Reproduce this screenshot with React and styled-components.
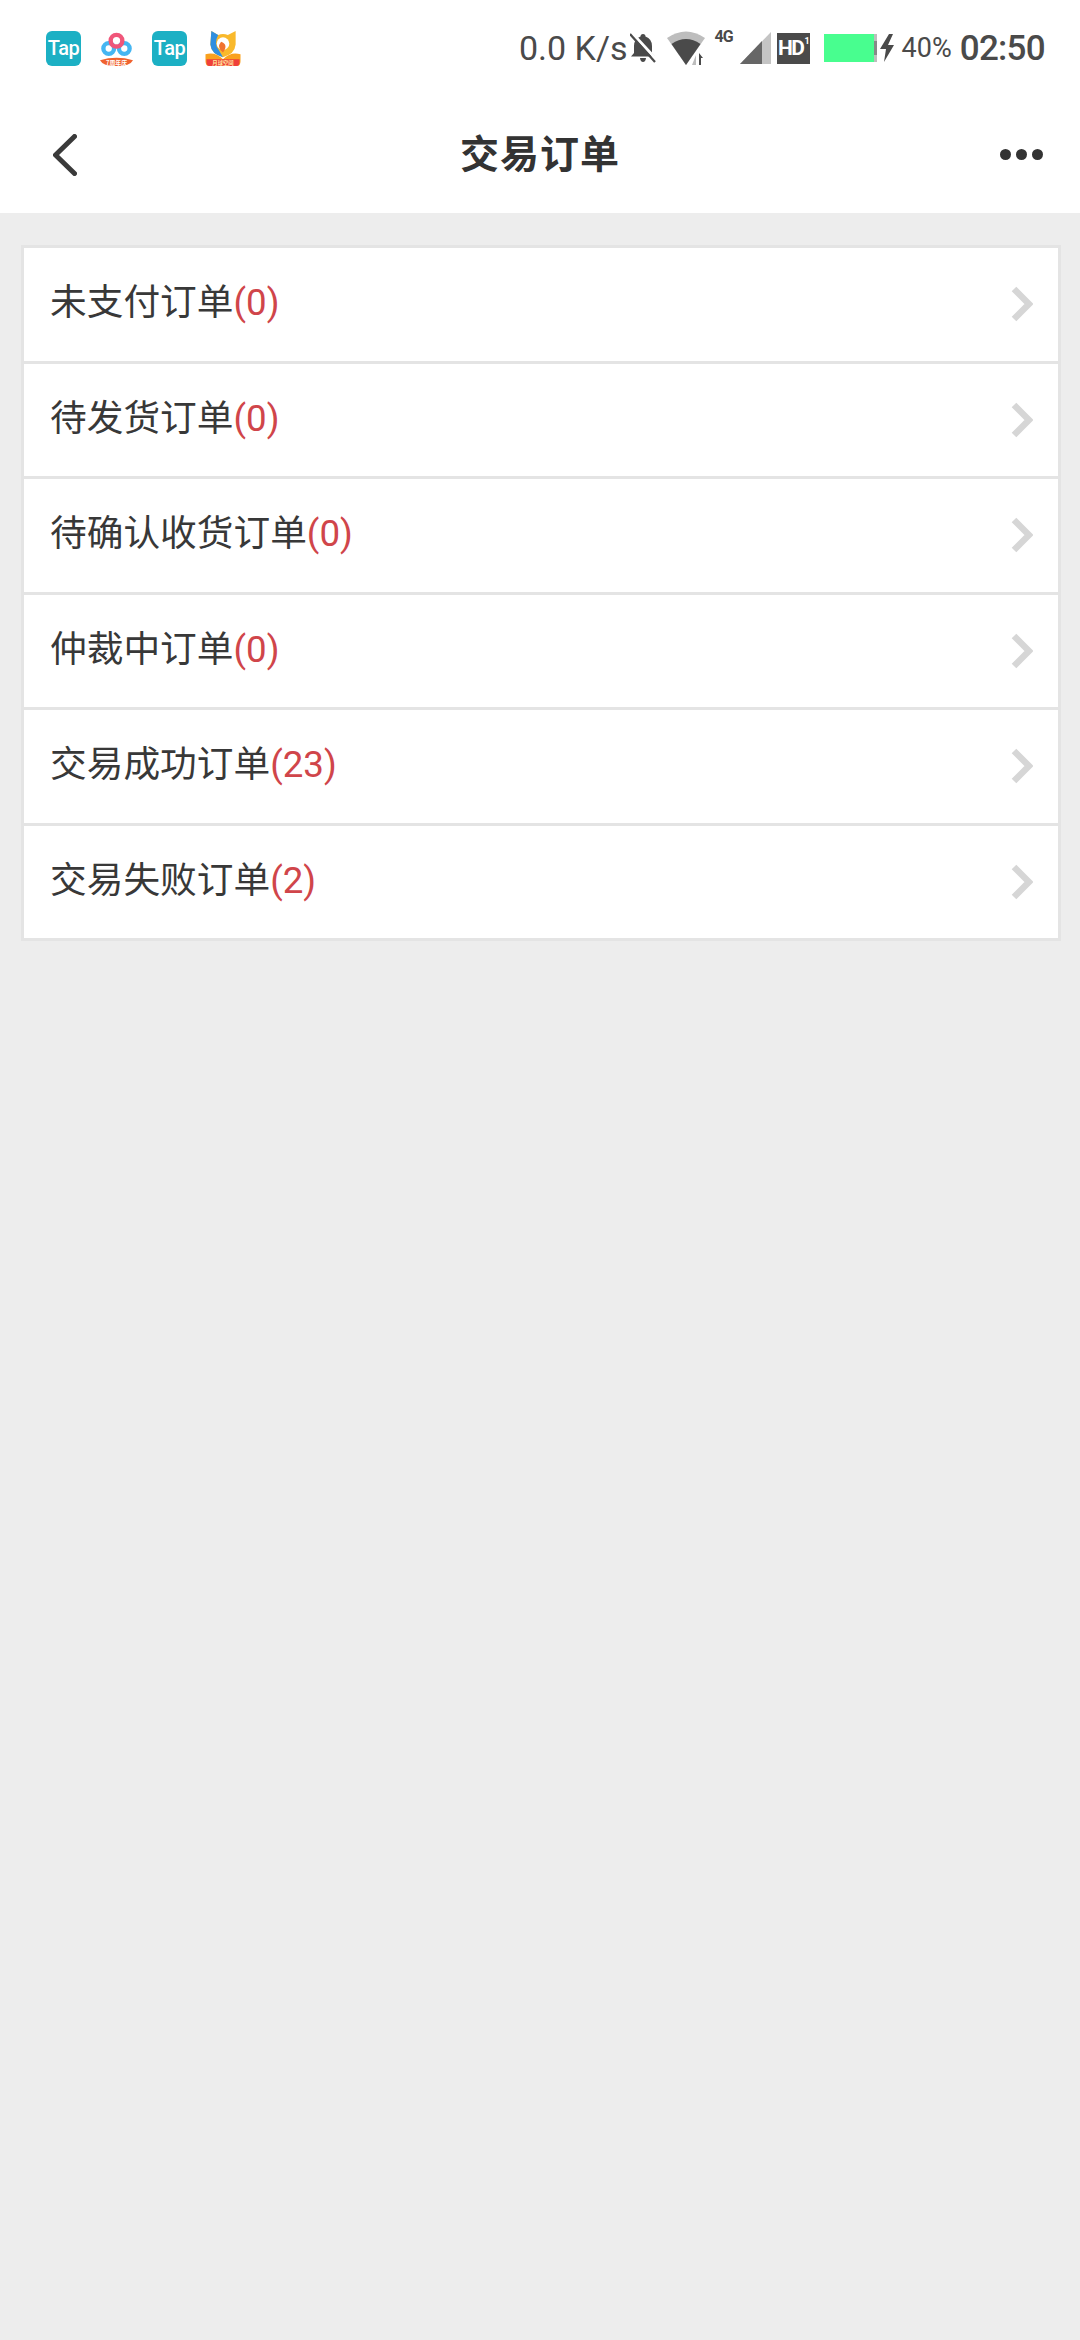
import React from "react";
import styled, { createGlobalStyle } from "styled-components";

const orders = [
  { name: "未支付订单", count: 0 },
  { name: "待发货订单", count: 0 },
  { name: "待确认收货订单", count: 0 },
  { name: "仲裁中订单", count: 0 },
  { name: "交易成功订单", count: 23 },
  { name: "交易失败订单", count: 2 },
];

const TapIcon = () => <TapBadge>Tap</TapBadge>;

const BaiduIcon = () => (
  <svg width="35" height="35" viewBox="0 0 36 36">
    <circle cx="10" cy="18" r="5.500" fill="none" stroke="#45b6f2" strokeWidth="4.500" />
    <circle cx="26" cy="18" r="5.500" fill="none" stroke="#45b6f2" strokeWidth="4.500" />
    <circle cx="18" cy="10" r="6" fill="none" stroke="#f0567a" strokeWidth="4.500" />
    <path d="M1 30 Q18 25 35 30 Q32 36 18 36 Q4 36 1 30Z" fill="#f0622f" />
    <text x="18" y="34.500" textAnchor="middle" fontSize="6" fontWeight="700" fill="#fff" fontFamily="Noto Sans CJK SC, sans-serif">7周年庆</text>
  </svg>
);

const FoxIcon = () => (
  <svg width="36" height="35" viewBox="0 0 36 36">
    <path d="M6 0 L13 4 Q18 2 23 4 L31 0 L31 14 Q30 24 18 27 Q6 24 5 14Z" fill="#f9b92c" />
    <path d="M6 0 L13 4 Q8 13 14 20 L18 27 Q6 24 5 14Z" fill="#2f8fe0" />
    <circle cx="18" cy="13" r="6.500" fill="#fff" />
    <path d="M18 22 Q11 17 16 11 Q24 14 18 22Z" fill="#f0722f" />
    <path d="M0 24 Q10 21 18 29 Q26 21 36 24 L36 31 Q36 36 32 36 L4 36 Q0 36 0 31Z" fill="#f9a11f" />
    <path d="M1 29 L35 29 L35 32 Q35 36 32 36 L4 36 Q1 36 1 32Z" fill="#ef3f3a" />
    <text x="18" y="35" textAnchor="middle" fontSize="5.500" fontWeight="700" fill="#ffe9a0" fontFamily="Noto Sans CJK SC, sans-serif">月球空间</text>
  </svg>
);

const BellOffIcon = () => (
  <svg width="26" height="30" viewBox="0 0 26 30">
    <path d="M13 1 Q15.500 1 15.500 3.500 Q22 6 22 13 L22 20 L25 23.500 L1 23.500 L4 20 L4 13 Q4 6 10.500 3.500 Q10.500 1 13 1Z" fill="#4a4a4a" />
    <path d="M10 25 L16 25 Q15.500 29 13 29 Q10.500 29 10 25Z" fill="#4a4a4a" />
    <path d="M2 0 L26 26" stroke="#fff" strokeWidth="3" />
    <path d="M0 1 L25 29" stroke="#4a4a4a" strokeWidth="2.200" />
  </svg>
);

const WifiIcon = () => (
  <svg width="40" height="36" viewBox="0 0 40 36">
    <path d="M1 8 Q20 -5 39 8 L20 35Z" fill="#bdbdbd" />
    <path d="M5.500 14 Q20 4 34.500 14 L20 35Z" fill="#4a4a4a" />
    <path d="M30 25 L30 35 L26 35Z" fill="#bdbdbd" />
    <path d="M33 23 L37 28 L35 28 L35 35 L33 35Z" fill="#4a4a4a" />
  </svg>
);

const SignalIcon = () => (
  <svg width="31" height="32" viewBox="0 0 31 32">
    <path d="M31 0 L31 32 L0 32Z" fill="#c4c4c4" />
    <path d="M22 9 L22 32 L0 32Z" fill="#666666" />
  </svg>
);

const BoltIcon = () => (
  <svg width="14" height="28" viewBox="0 0 14 28">
    <path d="M9 0 L0 15 L6 15 L4 28 L14 11 L8 11 L13 0Z" fill="#4a4a4a" />
  </svg>
);

const BackIcon = () => (
  <svg width="24" height="42" viewBox="0 0 24 42">
    <path d="M21.500 2.500 L2.500 21 L21.500 39.500" fill="none" stroke="#3a3a3a" strokeWidth="5" strokeLinecap="round" strokeLinejoin="round" />
  </svg>
);

const ChevronIcon = () => (
  <svg width="22" height="36" viewBox="0 0 22 36">
    <path d="M3 3 L18 18 L3 33" fill="none" stroke="#d6d6d6" strokeWidth="6.500" />
  </svg>
);

const App = () => {
  return (
    <Page>
      <GlobalStyle />
      <StatusBar>
        <AppIcons>
          <TapIcon />
          <BaiduIcon />
          <TapIcon />
          <FoxIcon />
        </AppIcons>
        <StatusRight>
          <Speed>0.0 K/s</Speed>
          <BellOffIcon />
          <WifiSlot>
            <WifiIcon />
          </WifiSlot>
          <NetType>4G</NetType>
          <SignalIcon />
          <HdBadge>
            HD<sup>1</sup>
          </HdBadge>
          <Battery>
            <BatteryFill />
            <BatteryCap />
          </Battery>
          <BoltIcon />
          <Percent>40%</Percent>
          <Clock>02:50</Clock>
        </StatusRight>
      </StatusBar>
      <Header>
        <BackButton>
          <BackIcon />
        </BackButton>
        <Title>交易订单</Title>
        <MoreButton>
          <Dot />
          <Dot />
          <Dot />
        </MoreButton>
      </Header>
      <OrderList>
        {orders.map((order) => (
          <OrderRow key={order.name}>
            <OrderName>
              {order.name}
              <OrderCount>({order.count})</OrderCount>
            </OrderName>
            <ChevronIcon />
          </OrderRow>
        ))}
      </OrderList>
    </Page>
  );
};

const GlobalStyle = createGlobalStyle`
  html, body {
    margin: 0;
    padding: 0;
    background: #ededed;
  }
  * {
    box-sizing: border-box;
  }
`;

const Page = styled.div`
  width: 1080px;
  height: 2340px;
  background: #ededed;
  font-family: Roboto, "Noto Sans CJK SC", sans-serif;
  overflow: hidden;
`;

const StatusBar = styled.div`
  height: 96px;
  background: #fff;
  padding: 0 35px 0 46px;
  display: flex;
  align-items: center;
  justify-content: space-between;
`;

const AppIcons = styled.div`
  display: flex;
  align-items: center;
  gap: 18px;
`;

const TapBadge = styled.div`
  width: 35px;
  height: 35px;
  border-radius: 6px;
  background: #1cb0c4;
  color: #fff;
  font-size: 20px;
  font-weight: 500;
  letter-spacing: -0.5px;
  display: flex;
  align-items: center;
  justify-content: center;
`;

const StatusRight = styled.div`
  display: flex;
  align-items: center;
  color: #4a4a4a;
`;

const Speed = styled.span`
  font-size: 34px;
  line-height: 40px;
  margin-right: 3px;
`;

const WifiSlot = styled.div`
  display: flex;
  margin-left: 10px;
`;

const NetType = styled.span`
  font-size: 16px;
  font-weight: 700;
  letter-spacing: -1px;
  align-self: flex-start;
  margin: 0 7px 0 8px;
  line-height: 18px;
`;

const HdBadge = styled.div`
  width: 33px;
  height: 31px;
  margin-left: 6px;
  background: #4a4a4a;
  color: #fff;
  font-size: 21px;
  font-weight: 700;
  letter-spacing: -1.5px;
  display: flex;
  align-items: center;
  justify-content: center;

  & sup {
    font-size: 9px;
    line-height: 1;
    align-self: flex-start;
    margin: 4px 0 0 1px;
  }
`;

const Battery = styled.div`
  display: flex;
  align-items: center;
  margin-left: 14px;
  margin-right: 3px;
`;

const BatteryFill = styled.div`
  width: 50px;
  height: 28px;
  background: #48fe8f;
`;

const BatteryCap = styled.div`
  width: 3px;
  height: 28px;
  background: linear-gradient(to bottom, #bdbdbd 0 25%, #888 25% 75%, #bdbdbd 75%);
`;

const Percent = styled.span`
  font-size: 27px;
  margin: 0 8px 0 8px;
`;

const Clock = styled.span`
  font-size: 35px;
  font-weight: 500;
  letter-spacing: -0.7px;
`;

const Header = styled.div`
  height: 117px;
  background: #fff;
  display: grid;
  grid-template-columns: 1fr auto 1fr;
  align-items: center;
  padding: 0 37px;
`;

const BackButton = styled.div`
  display: flex;
  margin-left: 16px;
`;

const Title = styled.h1`
  margin: 0;
  font-size: 39px;
  line-height: 46px;
  font-weight: 700;
  letter-spacing: 1px;
  color: #333;
`;

const MoreButton = styled.div`
  display: flex;
  justify-content: flex-end;
  gap: 5px;
`;

const Dot = styled.span`
  width: 11px;
  height: 11px;
  border-radius: 50%;
  background: #333;
`;

const OrderList = styled.div`
  margin: 32px 19px 0 21px;
  border: 3px solid #e4e4e4;
  border-bottom-width: 0;
`;

const OrderRow = styled.div`
  height: 115.5px;
  background: #fff;
  border-bottom: 3px solid #e4e4e4;
  padding: 0 25px 0 26px;
  display: flex;
  align-items: center;
  justify-content: space-between;
`;

const OrderName = styled.span`
  font-size: 36.7px;
  color: #383838;
  line-height: 44px;
  margin-top: -2px;
`;

const OrderCount = styled.span`
  color: #d0454a;
`;

export default App;
